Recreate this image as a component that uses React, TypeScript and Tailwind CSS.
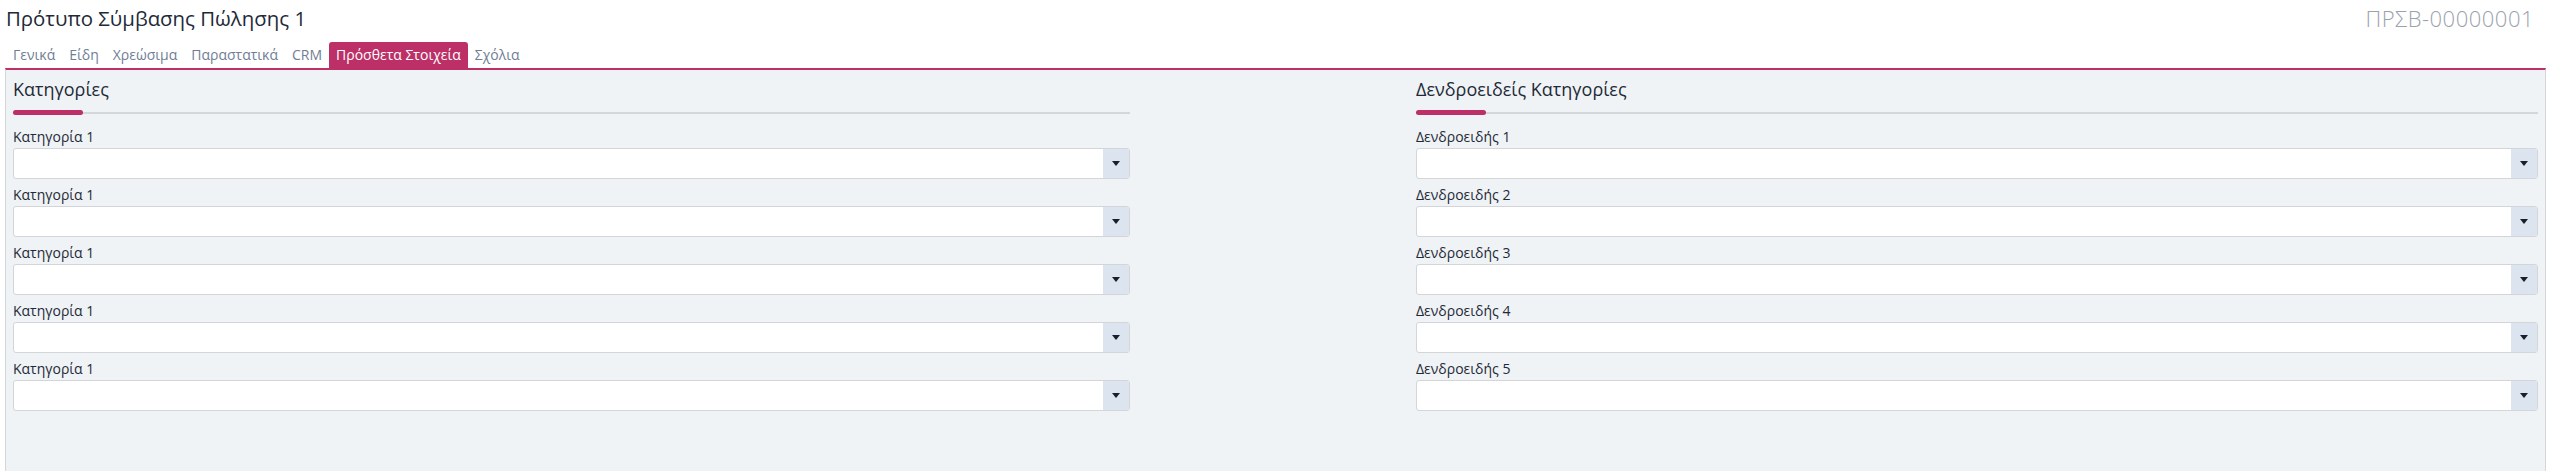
import React from "react";

const tabs = ["Γενικά", "Είδη", "Χρεώσιμα", "Παραστατικά", "CRM", "Πρόσθετα Στοιχεία", "Σχόλια"];
const activeTab = "Πρόσθετα Στοιχεία";

const SelectField: React.FC<{ label: string }> = ({ label }) => (
  <div className="mt-[7px] first:mt-0">
    <div className="text-[14px] leading-[18px] text-[#1e2a38]">{label}</div>
    <div className="mt-[2px] flex h-[31px] rounded-[3px] border border-[#d3d5d8] bg-white overflow-hidden">
      <div className="flex-1" />
      <div className="flex w-[26px] items-center justify-center bg-[#dbe4ef]">
        <svg width="8" height="5" viewBox="0 0 8 5">
          <path d="M0 0 H8 L4 5 Z" fill="#16202c" />
        </svg>
      </div>
    </div>
  </div>
);

const Section: React.FC<{ title: string; labels: string[]; width: string }> = ({ title, labels, width }) => (
  <div className={width}>
    <h2 className="text-[18px] leading-[24px] text-[#1e2a38]">{title}</h2>
    <div className="relative mt-[9px] h-[5px]">
      <div className="absolute left-0 right-0 top-[2px] h-[2px] bg-[#d4d6d9]" />
      <div className="absolute left-0 top-0 h-[5px] w-[70px] rounded-full bg-[#bc2f67]" />
    </div>
    <div className="mt-[13px]">
      {labels.map((l, i) => (
        <SelectField key={i} label={l} />
      ))}
    </div>
  </div>
);

export default function App() {
  return (
    <div className="h-[471px] bg-white font-['Open_Sans',sans-serif] overflow-hidden">
      {/* Title row */}
      <div className="flex items-start justify-between pl-[6px] pr-[17px] pt-[3px]">
        <h1 className="text-[20.4px] leading-[30px] text-[#1e2a38]">Πρότυπο Σύμβασης Πώλησης 1</h1>
        <div className="text-[22px] leading-[30px] font-light text-[#9aa2ad] tracking-[0.5px]">ΠΡΣΒ-00000001</div>
      </div>

      {/* Tabs */}
      <div className="mt-[9px] flex pl-[6px]">
        {tabs.map((t) => (
          <div
            key={t}
            className={`h-[26px] px-[7px] text-[14px] leading-[26px] rounded-t-[3px] ${
              t === activeTab ? "bg-[#bc2f67] text-white" : "text-[#6f7e95]"
            }`}
          >
            {t}
          </div>
        ))}
      </div>

      {/* Panel */}
      <div className="mx-[5px] h-[403px] border-t-2 border-x border-t-[#bc2f67] border-x-[#d4d6d9] bg-[#f0f3f5] px-[7px] pt-[7px]">
        <div className="flex justify-between">
          <Section
            title="Κατηγορίες"
            width="w-[1117px]"
            labels={["Κατηγορία 1", "Κατηγορία 1", "Κατηγορία 1", "Κατηγορία 1", "Κατηγορία 1"]}
          />
          <Section
            title="Δενδροειδείς Κατηγορίες"
            width="w-[1122px]"
            labels={["Δενδροειδής 1", "Δενδροειδής 2", "Δενδροειδής 3", "Δενδροειδής 4", "Δενδροειδής 5"]}
          />
        </div>
      </div>
    </div>
  );
}
